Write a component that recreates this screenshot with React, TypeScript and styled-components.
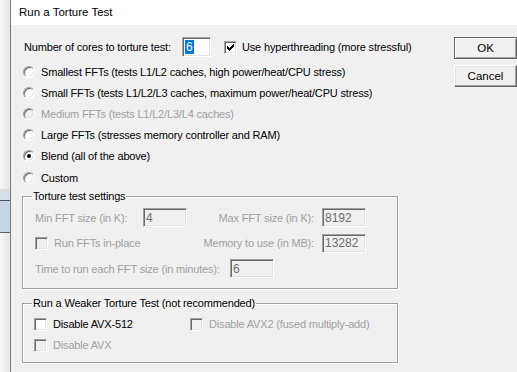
import React from 'react';
import styled, { createGlobalStyle } from 'styled-components';

const GlobalStyle = createGlobalStyle`
  html, body {
    margin: 0;
    padding: 0;
    background: #f0f0f0;
  }
  * {
    box-sizing: border-box;
  }
`;

const Screen = styled.div`
  display: flex;
  width: 517px;
  height: 372px;
  overflow: hidden;
  font-family: 'Liberation Sans', Arial, sans-serif;
  font-size: 11px;
  letter-spacing: -0.17px;
  color: #000;
  white-space: nowrap;
`;

const Backdrop = styled.div`
  width: 10px;
  flex-shrink: 0;
  display: flex;
  flex-direction: column;
  background: linear-gradient(to right, #f7f7f7, #e6e6e6);
`;

const BehindWindow = styled.div`
  margin-top: 189px;
  height: 44px;
  background: #c6d5e5;
  border-top: 1px solid #d4dde8;
  border-bottom: 1px solid #5a5f66;
  box-shadow: inset 0 10px 0 #d6dfea, inset 0 11px 0 #4d5258;
`;

const Window = styled.div`
  flex: 1;
  display: flex;
  flex-direction: column;
  border-left: 1px solid #7a7a7a;
`;

const TitleBar = styled.div`
  height: 25px;
  flex-shrink: 0;
  background: #fff;
  display: flex;
  align-items: center;
  padding-left: 8px;
  padding-bottom: 1px;
  font-size: 11.5px;
  letter-spacing: 0;
`;

const Body = styled.div`
  flex: 1;
  display: flex;
  background: #f0f0f0;
  padding-top: 12px;
`;

const Main = styled.div`
  width: 443px;
  flex-shrink: 0;
  display: flex;
  flex-direction: column;
  padding-left: 11px;
`;

const CoresRow = styled.div`
  display: flex;
  align-items: center;
  height: 20px;
  padding-left: 2px;
`;

const CoresLabel = styled.span`
  width: 158px;
`;

const Field = styled.div<{ $w: number; $disabled?: boolean }>`
  width: ${(p) => p.$w}px;
  height: ${(p) => (p.$disabled ? 19 : 20)}px;
  display: flex;
  align-items: center;
  padding-left: 2px;
  border: 1px solid;
  border-color: #a0a0a0 #fff #fff #a0a0a0;
  box-shadow: inset 1px 1px 0 #696969, inset -1px -1px 0 #e3e3e3;
  background: ${(p) => (p.$disabled ? '#f0f0f0' : '#fff')};
  color: ${(p) => (p.$disabled ? '#6d6d6d' : '#000')};
  font-size: 12px;
  letter-spacing: 0;
`;

const Selected = styled.span`
  background: #0078d7;
  color: #fff;
  padding: 0 1px;
  line-height: 14px;
`;

const Check = styled.span<{ $disabled?: boolean }>`
  width: 13px;
  height: 13px;
  flex-shrink: 0;
  display: inline-flex;
  align-items: center;
  justify-content: center;
  border: 1px solid;
  border-color: #a0a0a0 #fff #fff #a0a0a0;
  box-shadow: inset 1px 1px 0 #696969, inset -1px -1px 0 #e3e3e3;
  background: ${(p) => (p.$disabled ? '#f0f0f0' : '#fff')};
`;

const CheckLabel = styled.label<{ $disabled?: boolean }>`
  display: flex;
  align-items: center;
  gap: 6px;
  color: ${(p) => (p.$disabled ? '#a0a0a0' : '#000')};
`;

const HyperLabel = styled(CheckLabel)`
  margin-left: 13px;
  gap: 5px;
`;

const RadioList = styled.div`
  display: flex;
  flex-direction: column;
  margin-top: 4px;
`;

const RadioRow = styled.label<{ $disabled?: boolean }>`
  display: flex;
  align-items: center;
  height: 21.2px;
  padding-left: 1px;
  gap: 6px;
  color: ${(p) => (p.$disabled ? '#a0a0a0' : '#000')};
`;

const Radio = styled.span<{ $checked?: boolean; $disabled?: boolean }>`
  width: 12px;
  height: 12px;
  flex-shrink: 0;
  border-radius: 50%;
  display: inline-flex;
  align-items: center;
  justify-content: center;
  border: 1px solid;
  border-color: #a0a0a0 #fff #fff #a0a0a0;
  box-shadow: inset 1px 1px 0 #696969, inset -1px -1px 0 #e3e3e3;
  background: ${(p) => (p.$disabled ? '#f0f0f0' : '#fff')};

  &::after {
    content: '';
    width: 4px;
    height: 4px;
    border-radius: 50%;
    background: #000;
    display: ${(p) => (p.$checked ? 'block' : 'none')};
  }
`;

const Group = styled.fieldset<{ $gap: number }>`
  margin: ${(p) => p.$gap}px 0 0 0;
  width: 376px;
  min-width: 0;
  border: 1px solid #a0a0a0;
  box-shadow: 1px 1px 0 #fff, inset 1px 1px 0 #fff;
  padding: 0 31px 0 12px;
`;

const Legend = styled.legend`
  padding: 0 1px;
  margin-left: -3px;
  line-height: 13px;
`;

const SettingsRows = styled.div`
  display: flex;
  flex-direction: column;
  padding: 2px 0 6px;
`;

const SettingsRow = styled.div`
  display: flex;
  align-items: center;
  height: 25.5px;
  color: #a0a0a0;
`;

const SideLabel = styled.span<{ $w: number }>`
  width: ${(p) => p.$w}px;
  flex-shrink: 0;
`;

const RightPair = styled.div`
  margin-left: auto;
  display: flex;
  align-items: center;
  gap: 8px;
`;

const WeakerGrid = styled.div`
  display: grid;
  grid-template-columns: 156px 1fr;
  grid-auto-rows: 21px;
  align-items: center;
  padding: 4px 0 6px;
  margin-left: -1px;
`;

const Buttons = styled.div`
  display: flex;
  flex-direction: column;
  gap: 6px;
`;

const Button = styled.button<{ $default?: boolean }>`
  width: 63px;
  height: 22px;
  font-family: 'Liberation Sans', Arial, sans-serif;
  font-size: 11.5px;
  color: #000;
  background: #f0f0f0;
  padding: 0;
  border: 1px solid;
  border-color: ${(p) => (p.$default ? '#646464' : '#fff #696969 #696969 #fff')};
  box-shadow: ${(p) =>
    p.$default
      ? 'inset 1px 1px 0 #fff, inset -1px -1px 0 #a0a0a0'
      : 'inset -1px -1px 0 #a0a0a0, inset 1px 1px 0 #e3e3e3'};
`;

const CheckMark = () => (
  <svg width="7" height="7" viewBox="0 0 7 7" shapeRendering="crispEdges">
    <path
      d="M6 0h1v3h-1v1h-1v1h-1v1h-1v1h-1v-1h-1v-1h-1v-3h1v1h1v1h1v-1h1v-1h1z"
      fill="#000"
    />
  </svg>
);

const radios = [
  { label: 'Smallest FFTs (tests L1/L2 caches, high power/heat/CPU stress)' },
  { label: 'Small FFTs (tests L1/L2/L3 caches, maximum power/heat/CPU stress)' },
  { label: 'Medium FFTs (tests L1/L2/L3/L4 caches)', disabled: true },
  { label: 'Large FFTs (stresses memory controller and RAM)' },
  { label: 'Blend (all of the above)', checked: true },
  { label: 'Custom' },
];

export default function App() {
  return (
    <Screen>
      <GlobalStyle />
      <Backdrop>
        <BehindWindow />
      </Backdrop>
      <Window>
        <TitleBar>Run a Torture Test</TitleBar>
        <Body>
          <Main>
            <CoresRow>
              <CoresLabel>Number of cores to torture test:</CoresLabel>
              <Field $w={29}>
                <Selected>6</Selected>
              </Field>
              <HyperLabel>
                <Check>
                  <CheckMark />
                </Check>
                Use hyperthreading (more stressful)
              </HyperLabel>
            </CoresRow>

            <RadioList>
              {radios.map((r) => (
                <RadioRow key={r.label} $disabled={r.disabled}>
                  <Radio $checked={r.checked} $disabled={r.disabled} />
                  {r.label}
                </RadioRow>
              ))}
            </RadioList>

            <Group $gap={2}>
              <Legend>Torture test settings</Legend>
              <SettingsRows>
                <SettingsRow>
                  <SideLabel $w={108}>Min FFT size (in K):</SideLabel>
                  <Field $w={44} $disabled>4</Field>
                  <RightPair>
                    <span>Max FFT size (in K):</span>
                    <Field $w={44} $disabled>8192</Field>
                  </RightPair>
                </SettingsRow>
                <SettingsRow>
                  <CheckLabel $disabled>
                    <Check $disabled />
                    Run FFTs in-place
                  </CheckLabel>
                  <RightPair>
                    <span>Memory to use (in MB):</span>
                    <Field $w={44} $disabled>13282</Field>
                  </RightPair>
                </SettingsRow>
                <SettingsRow>
                  <SideLabel $w={195}>Time to run each FFT size (in minutes):</SideLabel>
                  <Field $w={44} $disabled>6</Field>
                </SettingsRow>
              </SettingsRows>
            </Group>

            <Group $gap={8}>
              <Legend>Run a Weaker Torture Test (not recommended)</Legend>
              <WeakerGrid>
                <CheckLabel>
                  <Check />
                  Disable AVX-512
                </CheckLabel>
                <CheckLabel $disabled>
                  <Check $disabled />
                  Disable AVX2 (fused multiply-add)
                </CheckLabel>
                <CheckLabel $disabled>
                  <Check $disabled />
                  Disable AVX
                </CheckLabel>
              </WeakerGrid>
            </Group>
          </Main>
          <Buttons>
            <Button $default>OK</Button>
            <Button>Cancel</Button>
          </Buttons>
        </Body>
      </Window>
    </Screen>
  );
}
